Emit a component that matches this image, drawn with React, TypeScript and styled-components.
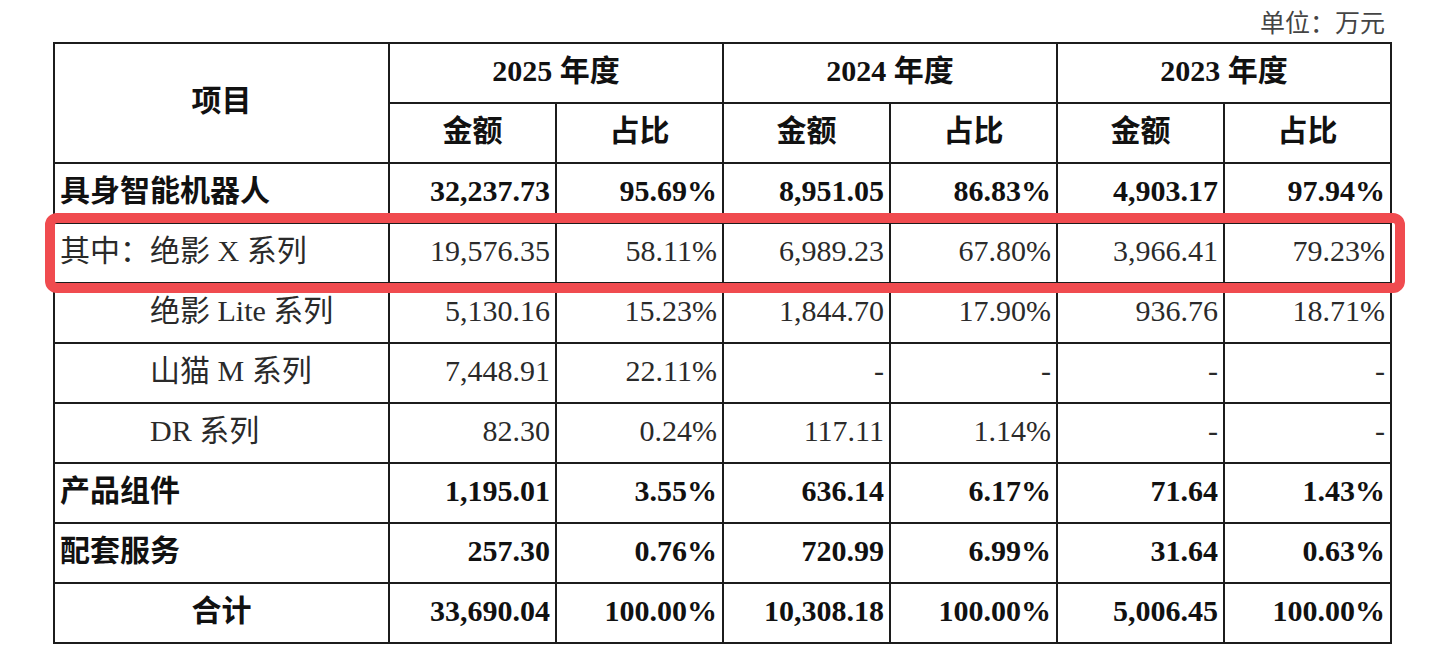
import styled, { createGlobalStyle } from "styled-components";

type Row = {
  label: string;
  kind: "main" | "sub" | "indent" | "total";
  values: string[];
};

const rows: Row[] = [
  { label: "具身智能机器人", kind: "main", values: ["32,237.73", "95.69%", "8,951.05", "86.83%", "4,903.17", "97.94%"] },
  { label: "其中：绝影 X 系列", kind: "sub", values: ["19,576.35", "58.11%", "6,989.23", "67.80%", "3,966.41", "79.23%"] },
  { label: "绝影 Lite 系列", kind: "indent", values: ["5,130.16", "15.23%", "1,844.70", "17.90%", "936.76", "18.71%"] },
  { label: "山猫 M 系列", kind: "indent", values: ["7,448.91", "22.11%", "-", "-", "-", "-"] },
  { label: "DR 系列", kind: "indent", values: ["82.30", "0.24%", "117.11", "1.14%", "-", "-"] },
  { label: "产品组件", kind: "main", values: ["1,195.01", "3.55%", "636.14", "6.17%", "71.64", "1.43%"] },
  { label: "配套服务", kind: "main", values: ["257.30", "0.76%", "720.99", "6.99%", "31.64", "0.63%"] },
  { label: "合计", kind: "total", values: ["33,690.04", "100.00%", "10,308.18", "100.00%", "5,006.45", "100.00%"] },
];

const years = ["2025", "2024", "2023"];

export default function App() {
  return (
    <>
      <GlobalStyle />
      <Page>
        <Unit>单位：万元</Unit>
        <TableWrap>
          <Table>
            <colgroup>
              <col style={{ width: 335 }} />
              {Array.from({ length: 6 }).map((_, i) => (
                <col key={i} style={{ width: 167 }} />
              ))}
            </colgroup>
            <thead>
              <tr>
                <HeadCell rowSpan={2}>项目</HeadCell>
                {years.map((y) => (
                  <HeadCell key={y} colSpan={2}>
                    {y} 年度
                  </HeadCell>
                ))}
              </tr>
              <tr>
                {years.map((y) => [
                  <HeadCell key={y + "a"}>金额</HeadCell>,
                  <HeadCell key={y + "b"}>占比</HeadCell>,
                ])}
              </tr>
            </thead>
            <tbody>
              {rows.map((row) => (
                <tr key={row.label}>
                  <LabelCell $kind={row.kind}>{row.label}</LabelCell>
                  {row.values.map((v, i) => (
                    <NumCell key={i} $bold={row.kind === "main" || row.kind === "total"}>
                      {v}
                    </NumCell>
                  ))}
                </tr>
              ))}
            </tbody>
          </Table>
          <Highlight />
        </TableWrap>
      </Page>
    </>
  );
}

const GlobalStyle = createGlobalStyle`
  html, body {
    margin: 0;
    padding: 0;
    background: #ffffff;
  }
  body {
    font-family: "Liberation Serif", "Noto Sans CJK SC", serif;
    color: #1e1e1e;
  }
`;

const Page = styled.div`
  width: 1337px;
  padding: 0 0 0 53px;
`;

const Unit = styled.div`
  height: 42px;
  display: flex;
  align-items: center;
  justify-content: flex-end;
  padding-right: 5px;
  font-size: 25px;
  color: #444;
`;

const TableWrap = styled.div`
  position: relative;
`;

const Table = styled.table`
  width: 1337px;
  table-layout: fixed;
  border-collapse: collapse;
  font-size: 30px;
  line-height: 36px;

  td, th {
    border: 2px solid #1c1c1c;
    height: 60px;
    box-sizing: border-box;
    padding: 0 5px 4px;
    white-space: nowrap;
  }
`;

const HeadCell = styled.th`
  text-align: center;
  font-weight: 700;
  color: #111;
`;

const LabelCell = styled.td<{ $kind: Row["kind"] }>`
  font-weight: ${(p) => (p.$kind === "main" || p.$kind === "total" ? 700 : 400)};
  color: ${(p) => (p.$kind === "main" || p.$kind === "total" ? "#111" : "#2a2a2a")};
  text-align: ${(p) => (p.$kind === "total" ? "center" : "left")};
  && {
    padding-left: ${(p) => (p.$kind === "indent" ? "95px" : "5px")};
  }
`;

const NumCell = styled.td<{ $bold: boolean }>`
  text-align: right;
  font-weight: ${(p) => (p.$bold ? 700 : 400)};
  color: ${(p) => (p.$bold ? "#111" : "#2a2a2a")};
`;

const Highlight = styled.div`
  position: absolute;
  left: -8px;
  top: 171px;
  width: 1360px;
  height: 80px;
  box-sizing: border-box;
  border: 10px solid #f04b4f;
  border-radius: 12px;
  pointer-events: none;
`;
